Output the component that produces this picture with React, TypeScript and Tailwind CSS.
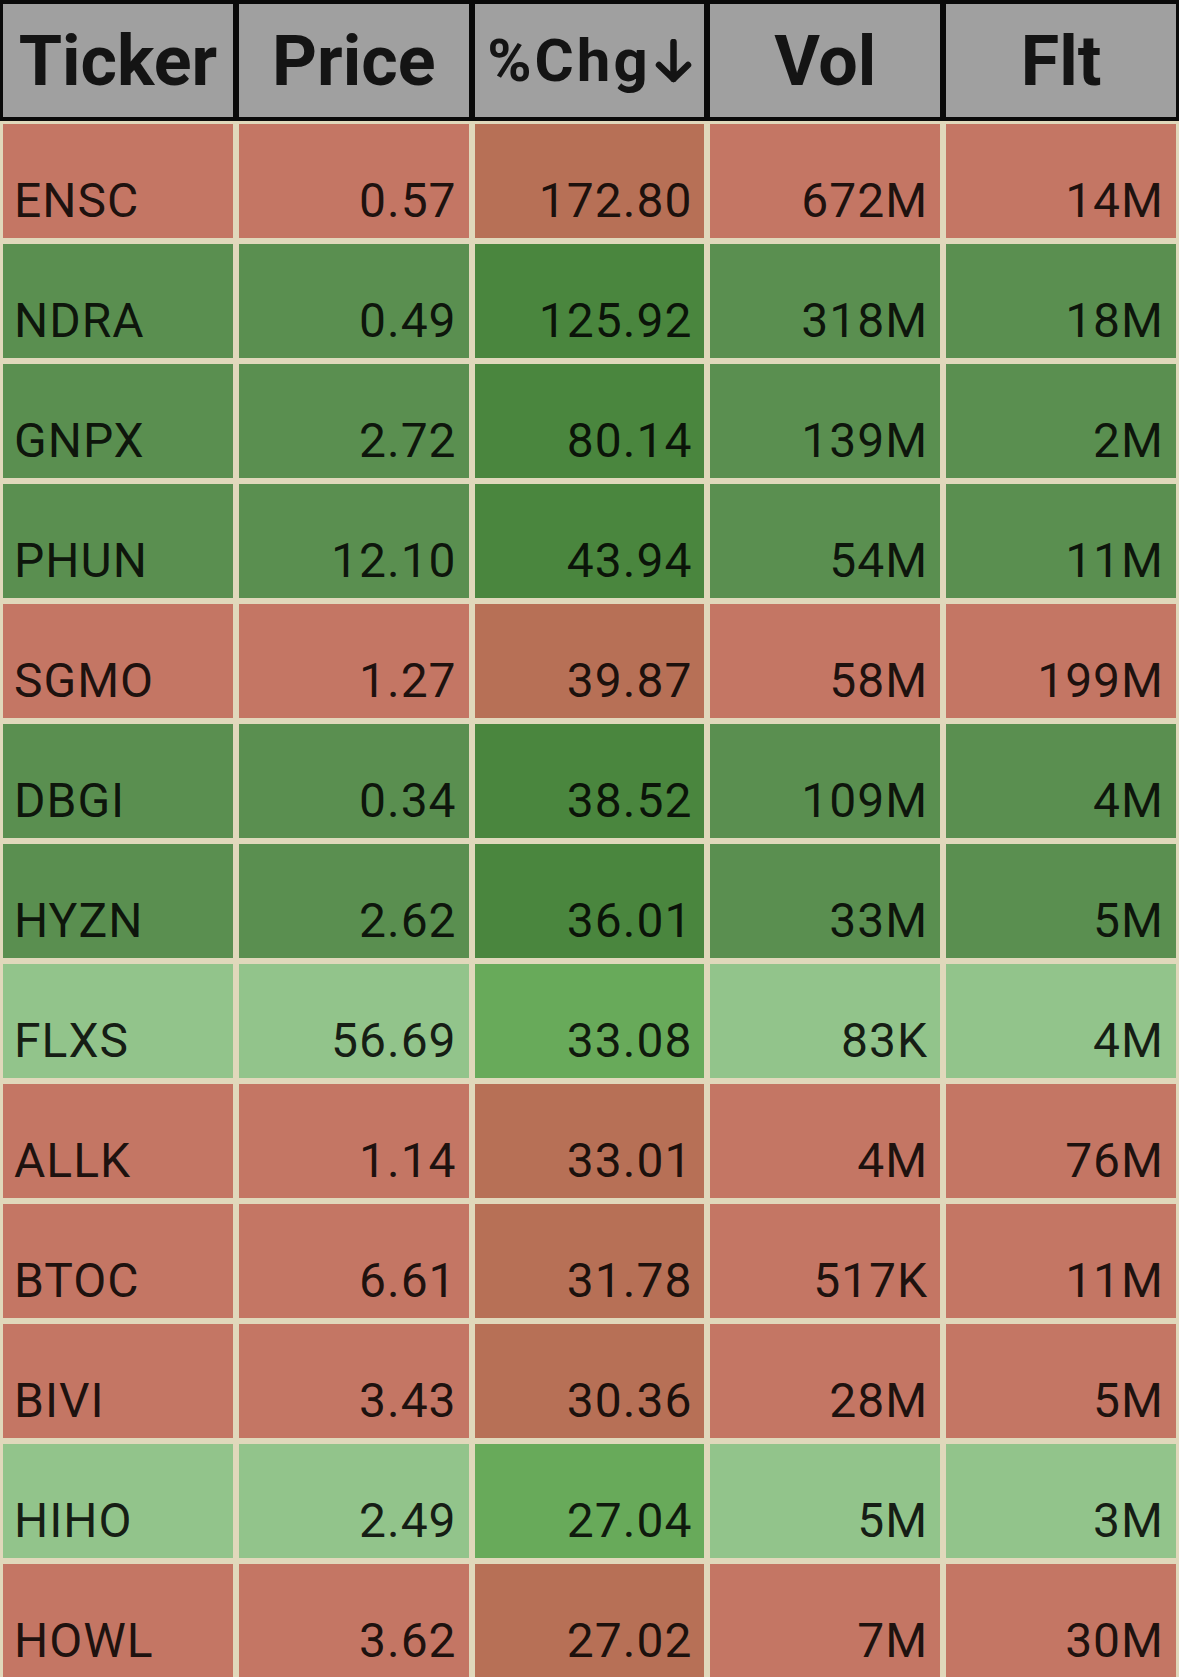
const rows = [
  { t: 'ENSC', p: '0.57', c: '172.80', v: '672M', f: '14M', k: 'red' },
  { t: 'NDRA', p: '0.49', c: '125.92', v: '318M', f: '18M', k: 'dark' },
  { t: 'GNPX', p: '2.72', c: '80.14', v: '139M', f: '2M', k: 'dark' },
  { t: 'PHUN', p: '12.10', c: '43.94', v: '54M', f: '11M', k: 'dark' },
  { t: 'SGMO', p: '1.27', c: '39.87', v: '58M', f: '199M', k: 'red' },
  { t: 'DBGI', p: '0.34', c: '38.52', v: '109M', f: '4M', k: 'dark' },
  { t: 'HYZN', p: '2.62', c: '36.01', v: '33M', f: '5M', k: 'dark' },
  { t: 'FLXS', p: '56.69', c: '33.08', v: '83K', f: '4M', k: 'light' },
  { t: 'ALLK', p: '1.14', c: '33.01', v: '4M', f: '76M', k: 'red' },
  { t: 'BTOC', p: '6.61', c: '31.78', v: '517K', f: '11M', k: 'red' },
  { t: 'BIVI', p: '3.43', c: '30.36', v: '28M', f: '5M', k: 'red' },
  { t: 'HIHO', p: '2.49', c: '27.04', v: '5M', f: '3M', k: 'light' },
  { t: 'HOWL', p: '3.62', c: '27.02', v: '7M', f: '30M', k: 'red' },
]

const colors = {
  red: { cell: 'bg-[#c47664]', chg: 'bg-[#b77056]' },
  dark: { cell: 'bg-[#5a8f50]', chg: 'bg-[#4a863e]' },
  light: { cell: 'bg-[#92c48b]', chg: 'bg-[#68aa5a]' },
}

function DownArrow() {
  return (
    <svg width="37" height="44" viewBox="0 0 37 44" className="ml-[4px]">
      <path
        d="M18.5 3 V40 M4 26 L18.5 40 L33 26"
        fill="none"
        stroke="#141414"
        strokeWidth="6.5"
        strokeLinecap="round"
        strokeLinejoin="round"
      />
    </svg>
  )
}

export default function App() {
  return (
    <div className="min-h-screen w-[1179px] bg-[#e0d8bb] font-['Roboto','Liberation_Sans',sans-serif]">
      {/* Header */}
      <div className="grid grid-cols-5 gap-x-[6px] bg-[#0a0a0a] px-[3px] pt-[4px] pb-[4px]">
        {['Ticker', 'Price'].map((h) => (
          <div key={h} className="flex h-[113px] items-center justify-center bg-[#a0a0a0] text-[70px] font-bold leading-none text-[#141414]">
            {h}
          </div>
        ))}
        <div className="flex h-[113px] items-center justify-center bg-[#a0a0a0] text-[60px] font-bold leading-none text-[#141414]">
          <span className="tracking-[3px]">%Chg</span>
          <DownArrow />
        </div>
        {['Vol', 'Flt'].map((h) => (
          <div key={h} className="flex h-[113px] items-center justify-center bg-[#a0a0a0] text-[70px] font-bold leading-none text-[#141414]">
            {h}
          </div>
        ))}
      </div>

      {/* Rows */}
      <div className="flex flex-col gap-y-[6px] px-[3px] pt-[3px]">
        {rows.map((r) => {
          const c = colors[r.k as keyof typeof colors]
          return (
            <div key={r.t} className="grid h-[114px] grid-cols-5 gap-x-[6px] text-[48px] font-normal leading-none tracking-[1px] text-black/85">
              <div className={`flex items-end pb-[13px] pl-[11px] ${c.cell}`}>{r.t}</div>
              <div className={`flex items-end justify-end pb-[13px] pr-[12px] ${c.cell}`}>{r.p}</div>
              <div className={`flex items-end justify-end pb-[13px] pr-[12px] ${c.chg}`}>{r.c}</div>
              <div className={`flex items-end justify-end pb-[13px] pr-[12px] ${c.cell}`}>{r.v}</div>
              <div className={`flex items-end justify-end pb-[13px] pr-[12px] ${c.cell}`}>{r.f}</div>
            </div>
          )
        })}
      </div>
    </div>
  )
}
